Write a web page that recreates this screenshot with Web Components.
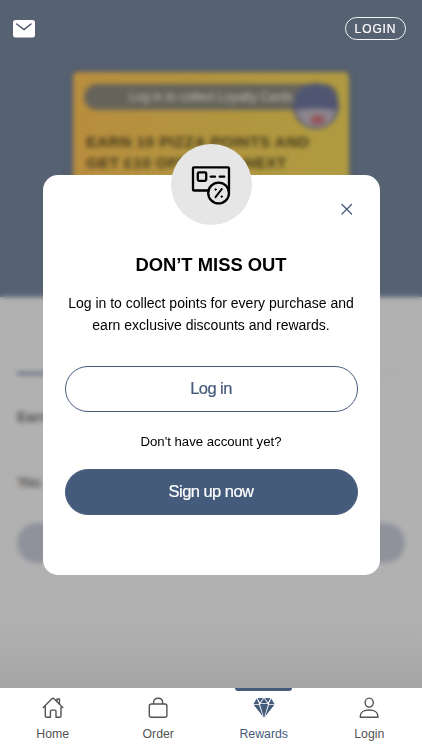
<!DOCTYPE html>
<html lang="en">
<head>
<meta charset="utf-8">
<meta name="viewport" content="width=device-width, initial-scale=1">
<title>Rewards</title>
<style>
  body {
    margin: 0;
    font-family: "Liberation Sans", Arial, sans-serif;
    --brand: #455b7b;
    --ink: #535353;
  }
</style>
</head>
<body>
<app-shell>
  <rewards-page slot="page">
    <loyalty-card slot="card">
      <span slot="pill">Log in to collect Loyalty Cards</span>
      EARN 10 PIZZA POINTS AND<br>GET £10 OFF YOUR NEXT
    </loyalty-card>
    <span slot="earn">Earn</span>
    <span slot="points">You</span>
  </rewards-page>
  <top-bar slot="top">LOGIN</top-bar>
  <login-modal slot="modal">
    <span slot="title">DON’T MISS OUT</span>
    <span slot="text">Log in to collect points for every purchase and<br>earn exclusive discounts and rewards.</span>
    <pill-button slot="login">Log in</pill-button>
    <span slot="hint">Don't have account yet?</span>
    <pill-button slot="signup" filled>Sign up now</pill-button>
  </login-modal>
  <nav-bar slot="nav">
    <nav-item>
      <svg slot="icon" width="22" height="22" viewBox="0 0 22 22" fill="none" stroke="currentColor" stroke-width="1.4" stroke-linejoin="round" stroke-linecap="round">
        <path d="M1.3 10.6 9.9 1.8Q11 .8 12.1 1.8L20.7 10.6M3.3 8.8V19.1Q3.3 20.3 4.5 20.3H8.4V14.3Q8.4 13.1 9.6 13.1H12.8Q14 13.1 14 14.3V20.3H17.8Q19 20.3 19 19.1V8.8M15 4.6V2H17.5V7.1"/>
      </svg>
      Home
    </nav-item>
    <nav-item>
      <svg slot="icon" width="22" height="22" viewBox="0 0 22 22" fill="none" stroke="currentColor" stroke-width="1.4">
        <rect x="2.3" y="7" width="17.6" height="13.3" rx="2"/>
        <path d="M6.6 7V5.3C6.6 2.7 8.4 1.2 11.1 1.2S15.6 2.7 15.6 5.3V7"/>
      </svg>
      Order
    </nav-item>
    <nav-item active>
      <svg slot="icon" width="22" height="22" viewBox="0 0 22 22" fill="currentColor">
        <path d="M4.6 1H10.2L6.8 5.4zM11.8 1H17.4L15.2 5.4zM11 1.3 14.6 6.2H7.4zM3.8 1.4 6.1 6.9H.5zM18.2 1.4 21.5 6.9H15.9zM.5 7.7H6L9.9 19.6zM6.9 7H15.1L11 21.2zM16 7.7H21.5L12.1 19.6z"/>
      </svg>
      Rewards
    </nav-item>
    <nav-item>
      <svg slot="icon" width="22" height="22" viewBox="0 0 22 22" fill="none" stroke="currentColor" stroke-width="1.4" stroke-linejoin="round">
        <ellipse cx="11.2" cy="5.6" rx="4.1" ry="4.5"/>
        <path d="M2.3 20.3V18.9C2.3 15.2 6.2 13 11.1 13S19.9 15.2 19.9 18.9V20.3z"/>
      </svg>
      Login
    </nav-item>
  </nav-bar>
</app-shell>

<script>
  class AppShell extends HTMLElement {
    connectedCallback() {
      const shadowRoot = this.attachShadow({ mode: "open" });
      shadowRoot.innerHTML = `
      <style>
        :host {
          display: grid;
          grid-template-rows: 688px 62px;
          width: 422px;
          height: 750px;
          overflow: hidden;
        }
        #stage {
          display: grid;
          grid-template: 688px / 422px;
          overflow: hidden;
        }
        #page, #veil, #front {
          grid-area: 1 / 1;
        }
        #page {
          display: grid;
        }
        #veil {
          backdrop-filter: blur(2.6px);
        }
        #front {
          display: flex;
          flex-direction: column;
          align-items: center;
          z-index: 1;
        }
      </style>
      <div id="stage">
        <div id="page"><slot name="page"></slot></div>
        <div id="veil"></div>
        <div id="front">
          <slot name="top"></slot>
          <slot name="modal"></slot>
        </div>
      </div>
      <slot name="nav"></slot>
      `;
    }
  }

  class TopBar extends HTMLElement {
    connectedCallback() {
      const shadowRoot = this.attachShadow({ mode: "open" });
      shadowRoot.innerHTML = `
      <style>
        :host {
          display: flex;
          flex: none;
          justify-content: space-between;
          align-items: center;
          box-sizing: border-box;
          width: 100%;
          height: 57px;
          padding: 0 16px 0 13px;
        }
        button {
          box-sizing: border-box;
          width: 61px;
          height: 23px;
          padding: 0;
          border: 1px solid #f2f4f7;
          border-radius: 12px;
          background: none;
          color: white;
          font: 12px "Liberation Sans", Arial, sans-serif;
          letter-spacing: .9px;
          -webkit-text-stroke: .2px white;
        }
      </style>
      <svg width="22" height="18" viewBox="0 0 22 18">
        <rect width="22" height="17.4" rx="2.5" fill="white"/>
        <path d="M3.7 4 11 9.5 18 4" fill="none" stroke="#455166" stroke-width="1.4" stroke-linecap="round"/>
      </svg>
      <button><slot></slot></button>
      `;
    }
  }

  class RewardsPage extends HTMLElement {
    connectedCallback() {
      const shadowRoot = this.attachShadow({ mode: "open" });
      shadowRoot.innerHTML = `
      <style>
        :host {
          display: block;
          background: linear-gradient(#b1b1b1 620px, #a5a5a5);
          color: #555;
        }
        #hero {
          display: flex;
          justify-content: center;
          box-sizing: border-box;
          height: 297px;
          padding-top: 72px;
          background: #566172;
        }
        #body {
          padding: 75px 17px 0;
          font-size: 14px;
        }
        #tabs {
          height: 3px;
          background: linear-gradient(90deg, #5f6a7f 50%, #adadad 50%);
        }
        #earn {
          margin-top: 33px;
          font-weight: bold;
          line-height: 18px;
        }
        #points {
          margin-top: 47px;
          line-height: 18px;
          -webkit-text-stroke: .5px #555;
        }
        #action {
          height: 40px;
          margin-top: 32px;
          border-radius: 20px;
          background: #8f929b;
        }
      </style>
      <div id="hero"><slot name="card"></slot></div>
      <div id="body">
        <div id="tabs"></div>
        <div id="earn"><slot name="earn"></slot></div>
        <div id="points"><slot name="points"></slot></div>
        <div id="action"></div>
      </div>
      `;
    }
  }

  class LoyaltyCard extends HTMLElement {
    connectedCallback() {
      const shadowRoot = this.attachShadow({ mode: "open" });
      shadowRoot.innerHTML = `
      <style>
        :host {
          display: block;
          position: relative;
          box-sizing: border-box;
          width: 276px;
          height: 180px;
          padding: 12px 11px;
          border-radius: 5px;
          background: linear-gradient(100deg, #b98d3e, #b1953f 50%, #b09c41);
          box-shadow: 0 0 8px #4c5566;
        }
        #pill {
          height: 26px;
          border-radius: 13px;
          background: #66645a;
          color: #bab9b4;
          text-align: center;
          font-size: 12.3px;
          line-height: 27px;
        }
        #headline {
          margin-top: 21px;
          padding-left: 2px;
          color: #453b1c;
          font-weight: bold;
          font-size: 15.5px;
          line-height: 21px;
          letter-spacing: .42px;
          white-space: nowrap;
        }
        svg {
          position: absolute;
          top: 10px;
          right: 10px;
        }
      </style>
      <div id="pill"><slot name="pill"></slot></div>
      <div id="headline"><slot></slot></div>
      <svg width="46" height="48" viewBox="0 0 46 48">
        <circle cx="23" cy="24" r="23" fill="#505672"/>
        <path d="M3 28Q23 25 43 28Q41 39 33 43Q23 47 13 43Q5 38 3 28z" fill="#8d858d"/>
        <path d="M17 37 24 32 33 36 29 42H19z" fill="#96545a"/>
      </svg>
      `;
    }
  }

  class LoginModal extends HTMLElement {
    connectedCallback() {
      const shadowRoot = this.attachShadow({ mode: "open" });
      shadowRoot.innerHTML = `
      <style>
        :host {
          display: flex;
          flex: none;
          flex-direction: column;
          position: relative;
          box-sizing: border-box;
          width: 337px;
          height: 400px;
          margin-top: 118px;
          padding: 26px 22px 0;
          border-radius: 15px;
          background: white;
          color: black;
          text-align: center;
        }
        #emblem {
          display: flex;
          align-items: center;
          justify-content: center;
          position: absolute;
          top: -31px;
          left: 128px;
          width: 81px;
          height: 81px;
          border-radius: 50%;
          background: #e6e6e6;
        }
        #close {
          align-self: flex-end;
          width: 17px;
          height: 17px;
          margin-right: 2px;
          padding: 0;
          border: none;
          background: none;
        }
        #close svg {
          display: block;
        }
        h1 {
          margin: 35px 0 0;
          font-size: 18.4px;
          line-height: 24px;
        }
        #text {
          margin: 16px -10px 0;
          font-size: 14px;
          line-height: 21.5px;
        }
        #login {
          margin-top: 30px;
        }
        #hint {
          margin: 20px 0 17px;
          font-size: 13.2px;
          line-height: 20px;
        }
      </style>
      <div id="emblem">
        <svg width="40" height="40" viewBox="0 0 40 40" fill="none" stroke="black" stroke-width="2.3" stroke-linejoin="round" stroke-linecap="round">
          <path d="M17 25.5H3Q2 25.5 2 24.5V3.3Q2 2.3 3 2.3H37Q38 2.3 38 3.3V26"/>
          <rect x="6.8" y="7.4" width="8.4" height="8.4" rx="1.2"/>
          <path d="M19.7 11.7H24M28.7 11.7H33.2"/>
          <circle cx="27.6" cy="28" r="10.4"/>
          <path d="M30.9 23.9 24.5 32.2" stroke-width="1.9"/>
          <circle cx="24.6" cy="24.5" r=".8" fill="black" stroke-width=".8"/>
          <circle cx="30.7" cy="31.6" r=".8" fill="black" stroke-width=".8"/>
        </svg>
      </div>
      <button id="close" aria-label="Close">
        <svg width="17" height="17" viewBox="0 0 17 17" stroke="#455b7b" stroke-width="1.3" stroke-linecap="round">
          <path d="M3 3.5 12.5 13M12.5 3.5 3 13"/>
        </svg>
      </button>
      <h1><slot name="title"></slot></h1>
      <div id="text"><slot name="text"></slot></div>
      <div id="login"><slot name="login"></slot></div>
      <div id="hint"><slot name="hint"></slot></div>
      <slot name="signup"></slot>
      `;
    }
  }

  class PillButton extends HTMLElement {
    connectedCallback() {
      const shadowRoot = this.attachShadow({ mode: "open" });
      shadowRoot.innerHTML = `
      <style>
        :host {
          display: block;
        }
        button {
          display: block;
          width: 100%;
          height: 46px;
          padding: 0 0 2px;
          border: 1px solid var(--brand);
          border-radius: 23px;
          background: white;
          color: var(--brand);
          font: 16.5px "Liberation Sans", Arial, sans-serif;
          letter-spacing: -.55px;
          -webkit-text-stroke: .2px currentColor;
        }
        :host([filled]) button {
          background: var(--brand);
          color: white;
        }
      </style>
      <button><slot></slot></button>
      `;
    }
  }

  class NavBar extends HTMLElement {
    connectedCallback() {
      const shadowRoot = this.attachShadow({ mode: "open" });
      shadowRoot.innerHTML = `
      <style>
        :host {
          display: grid;
          grid-template-columns: repeat(4, 1fr);
          background: white;
        }
      </style>
      <slot></slot>
      `;
    }
  }

  class NavItem extends HTMLElement {
    connectedCallback() {
      const shadowRoot = this.attachShadow({ mode: "open" });
      shadowRoot.innerHTML = `
      <style>
        :host {
          display: flex;
          flex-direction: column;
          align-items: center;
          color: var(--ink);
          font-size: 12.3px;
          line-height: 16px;
        }
        :host([active]) {
          color: var(--brand);
        }
        #mark {
          width: 57px;
          height: 3px;
          margin-bottom: 6px;
          border-radius: 0 0 3px 3px;
        }
        :host([active]) #mark {
          background: var(--brand);
        }
        #label {
          margin-top: 7px;
        }
      </style>
      <div id="mark"></div>
      <slot name="icon"></slot>
      <div id="label"><slot></slot></div>
      `;
    }
  }

  customElements.define("app-shell", AppShell);
  customElements.define("top-bar", TopBar);
  customElements.define("rewards-page", RewardsPage);
  customElements.define("loyalty-card", LoyaltyCard);
  customElements.define("login-modal", LoginModal);
  customElements.define("pill-button", PillButton);
  customElements.define("nav-bar", NavBar);
  customElements.define("nav-item", NavItem);
</script>
</body>
</html>
